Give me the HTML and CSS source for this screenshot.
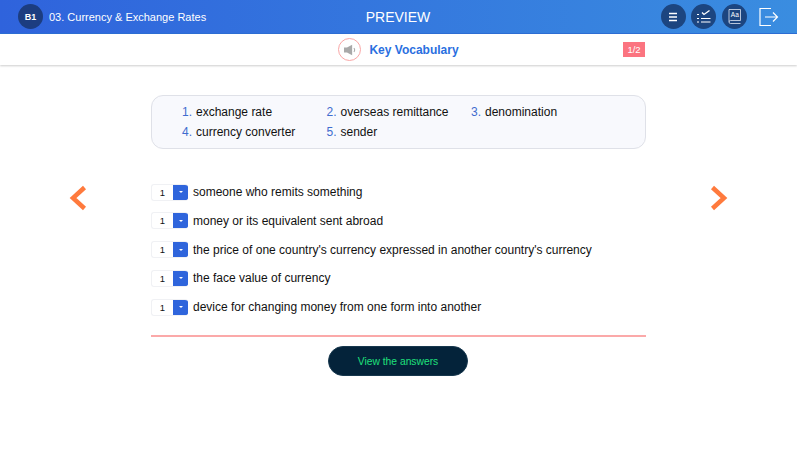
FILE: index.html
```html
<!DOCTYPE html>
<html lang="en">

<head>
  <meta charset="UTF-8" />
  <meta name="viewport" content="width=device-width, initial-scale=1.0" />
  <title>Key Vocabulary</title>
  <link rel="stylesheet" href="styles.css">
</head>

<body>
  <header class="topbar">
    <div class="lesson">
      <span class="level">B1</span>
      <span class="lesson-title">03. Currency &amp; Exchange Rates</span>
    </div>
    <div class="preview">PREVIEW</div>
    <div class="tools">
      <button class="tool" aria-label="Menu">
        <svg width="14" height="14" viewBox="0 0 14 14" fill="none" stroke="#fff" stroke-width="1.400">
          <path d="M3 3.500h8M3 7h8M3 10.500h8" />
        </svg>
      </button>
      <button class="tool" aria-label="Checklist">
        <svg width="14" height="13" viewBox="0 0 14 13" fill="none" stroke="#fff" stroke-width="1">
          <path d="M0 4.500h2M0 8.500h2M0 12h2M4 8.500h9.500M4 12h9.500" />
          <path d="M5 2.500l2 2 5.500-4" stroke-width="1.300" />
        </svg>
      </button>
      <button class="tool" aria-label="Dictionary">
        <svg width="13" height="15" viewBox="0 0 13 15" fill="none" stroke="#dfe6f2" stroke-width="0.800">
          <path d="M1 12.500V.500H12.500V11.500H2.500A1.500 1.500 0 0 0 2.500 14.500H12.500" />
          <text class="tool-text" x="6.800" y="8">Aa</text>
        </svg>
      </button>
      <button class="exit" aria-label="Exit">
        <svg width="20" height="20" viewBox="0 0 20 20" fill="none" stroke="#fff" stroke-width="1.200">
          <path d="M12 1.500H1v17h11" />
          <path d="M6 10h12.500M14 5.500l4.500 4.500-4.500 4.500" />
        </svg>
      </button>
    </div>
  </header>

  <div class="subbar">
    <div class="sub-center">
      <span class="sound">
        <svg width="14" height="12" viewBox="0 0 16 14">
          <path d="M1 4h3.500L10.500 1v12L4.500 10H1z" fill="#a9a9a9" />
          <path d="M12.500 4.800a3 3 0 0 1 0 4.400" fill="none" stroke="#a9a9a9" stroke-width="1.200" />
        </svg>
      </span>
      <span class="sub-title">Key Vocabulary</span>
    </div>
    <span class="page-count">1/2</span>
  </div>

  <main class="stage">
    <button class="arrow" aria-label="Previous">
      <svg width="18" height="26" viewBox="0 0 18 26" fill="none" stroke="#ff7a3d" stroke-width="4.500">
        <path d="M15.500 2.500L4 13l11.500 10.500" />
      </svg>
    </button>

    <div class="content">
      <ol class="word-bank">
        <li><span class="num">1.</span>exchange rate</li>
        <li><span class="num">2.</span>overseas remittance</li>
        <li><span class="num">3.</span>denomination</li>
        <li><span class="num">4.</span>currency converter</li>
        <li><span class="num">5.</span>sender</li>
      </ol>

      <div class="questions">
        <div class="question">
          <span class="picker"><span class="picker-value">1</span><span class="picker-btn"></span></span>
          someone who remits something
        </div>
        <div class="question">
          <span class="picker"><span class="picker-value">1</span><span class="picker-btn"></span></span>
          money or its equivalent sent abroad
        </div>
        <div class="question">
          <span class="picker"><span class="picker-value">1</span><span class="picker-btn"></span></span>
          the price of one country's currency expressed in another country's currency
        </div>
        <div class="question">
          <span class="picker"><span class="picker-value">1</span><span class="picker-btn"></span></span>
          the face value of currency
        </div>
        <div class="question">
          <span class="picker"><span class="picker-value">1</span><span class="picker-btn"></span></span>
          device for changing money from one form into another
        </div>
      </div>

      <div class="actions">
        <button class="answers">View the answers</button>
      </div>
    </div>

    <button class="arrow" aria-label="Next">
      <svg width="18" height="26" viewBox="0 0 18 26" fill="none" stroke="#ff7a3d" stroke-width="4.500">
        <path d="M2.500 2.500L14 13 2.500 23.500" />
      </svg>
    </button>
  </main>
</body>

</html>
```

FILE: styles.css
```css
body {
  margin: 0;
  font-family: "Liberation Sans", Arial, sans-serif;
  background: #fff;
  color: #111;
  height: 100vh;
  overflow: hidden;
}

button {
  border: none;
  padding: 0;
  background: none;
  font-family: inherit;
}

.topbar {
  height: 33px;
  display: grid;
  grid-template-columns: 1fr auto 1fr;
  align-items: center;
  padding: 0 18px 0 18px;
  background: linear-gradient(90deg, #2f63dc, #3a8de0);
  border-bottom: 1px solid #2d6fd6;
  color: #fff;
}

.lesson {
  display: flex;
  align-items: center;
  gap: 6px;
}

.level {
  width: 25px;
  height: 25px;
  border-radius: 50%;
  background: #1c3d80;
  font-size: 9px;
  font-weight: bold;
  display: flex;
  align-items: center;
  justify-content: center;
}

.lesson-title {
  font-size: 11px;
}

.preview {
  font-size: 14px;
  margin-left: -1px;
}

.tools {
  display: flex;
  justify-content: flex-end;
  align-items: center;
  gap: 5.500px;
}

.tool {
  width: 25px;
  height: 25px;
  border-radius: 50%;
  background: #1c4580;
  display: flex;
  align-items: center;
  justify-content: center;
}

.tool-text {
  fill: #fff;
  stroke: none;
  font-size: 6.500px;
  text-anchor: middle;
}

.exit {
  display: flex;
  margin-left: 7px;
}

.subbar {
  height: 31px;
  position: relative;
  display: flex;
  justify-content: center;
  align-items: center;
  box-shadow: 0 1px 2px rgba(0, 0, 0, 0.2);
}

.sub-center {
  display: flex;
  align-items: center;
  gap: 8px;
}

.sound {
  width: 21px;
  height: 21px;
  border: 1px solid #f9a6a6;
  border-radius: 50%;
  display: flex;
  align-items: center;
  justify-content: center;
}

.sub-title {
  font-size: 12px;
  font-weight: bold;
  color: #2a6fe0;
}

.page-count {
  position: absolute;
  left: 623px;
  top: 8px;
  width: 22px;
  height: 15px;
  background: #fb7480;
  color: #fff;
  font-size: 9.500px;
  display: flex;
  align-items: center;
  justify-content: center;
}

.stage {
  display: flex;
  justify-content: space-between;
  padding: 0 69px;
}

.arrow {
  display: flex;
  height: 26px;
  margin-top: 120px;
}

.content {
  width: 495px;
  padding-top: 30px;
}

.word-bank {
  margin: 0;
  padding: 6px 0 7px 23px;
  list-style: none;
  display: grid;
  grid-template-columns: repeat(3, 144.500px);
  grid-auto-rows: 20px;
  align-items: center;
  height: 54px;
  box-sizing: border-box;
  background: #f8f9fd;
  border: 1px solid #dfe1e8;
  border-radius: 12px;
  font-size: 12px;
}

.word-bank li {
  display: flex;
}

.num {
  width: 21px;
  padding-right: 4px;
  box-sizing: border-box;
  text-align: right;
  color: #3f6ccf;
}

.questions {
  margin-top: 34.500px;
  display: flex;
  flex-direction: column;
  gap: 11.750px;
  padding-bottom: 19.500px;
  border-bottom: 2px solid #fba9a9;
}

.question {
  display: flex;
  align-items: center;
  gap: 5px;
  height: 17px;
  font-size: 12px;
}

.picker {
  width: 37px;
  height: 17px;
  display: flex;
  box-sizing: border-box;
  border: 1px solid #f0f1f4;
  border-right: none;
  border-radius: 3px;
  overflow: hidden;
}

.picker-value {
  flex: 1;
  font-size: 9.500px;
  text-align: center;
  line-height: 15px;
}

.picker-btn {
  width: 15px;
  margin: -1px 0;
  background: #2f65dc;
  display: flex;
  align-items: center;
  justify-content: center;
}

.picker-btn::after {
  content: "";
  border: 2.500px solid transparent;
  border-top-color: #fff;
  border-bottom: none;
}

.actions {
  display: flex;
  justify-content: center;
  padding: 9px 1px 0 0;
}

.answers {
  width: 140px;
  height: 30px;
  border-radius: 15px;
  background: #04233a;
  border: 1px solid #17384e;
  color: #1fe07a;
  font-size: 10.300px;
}
```
